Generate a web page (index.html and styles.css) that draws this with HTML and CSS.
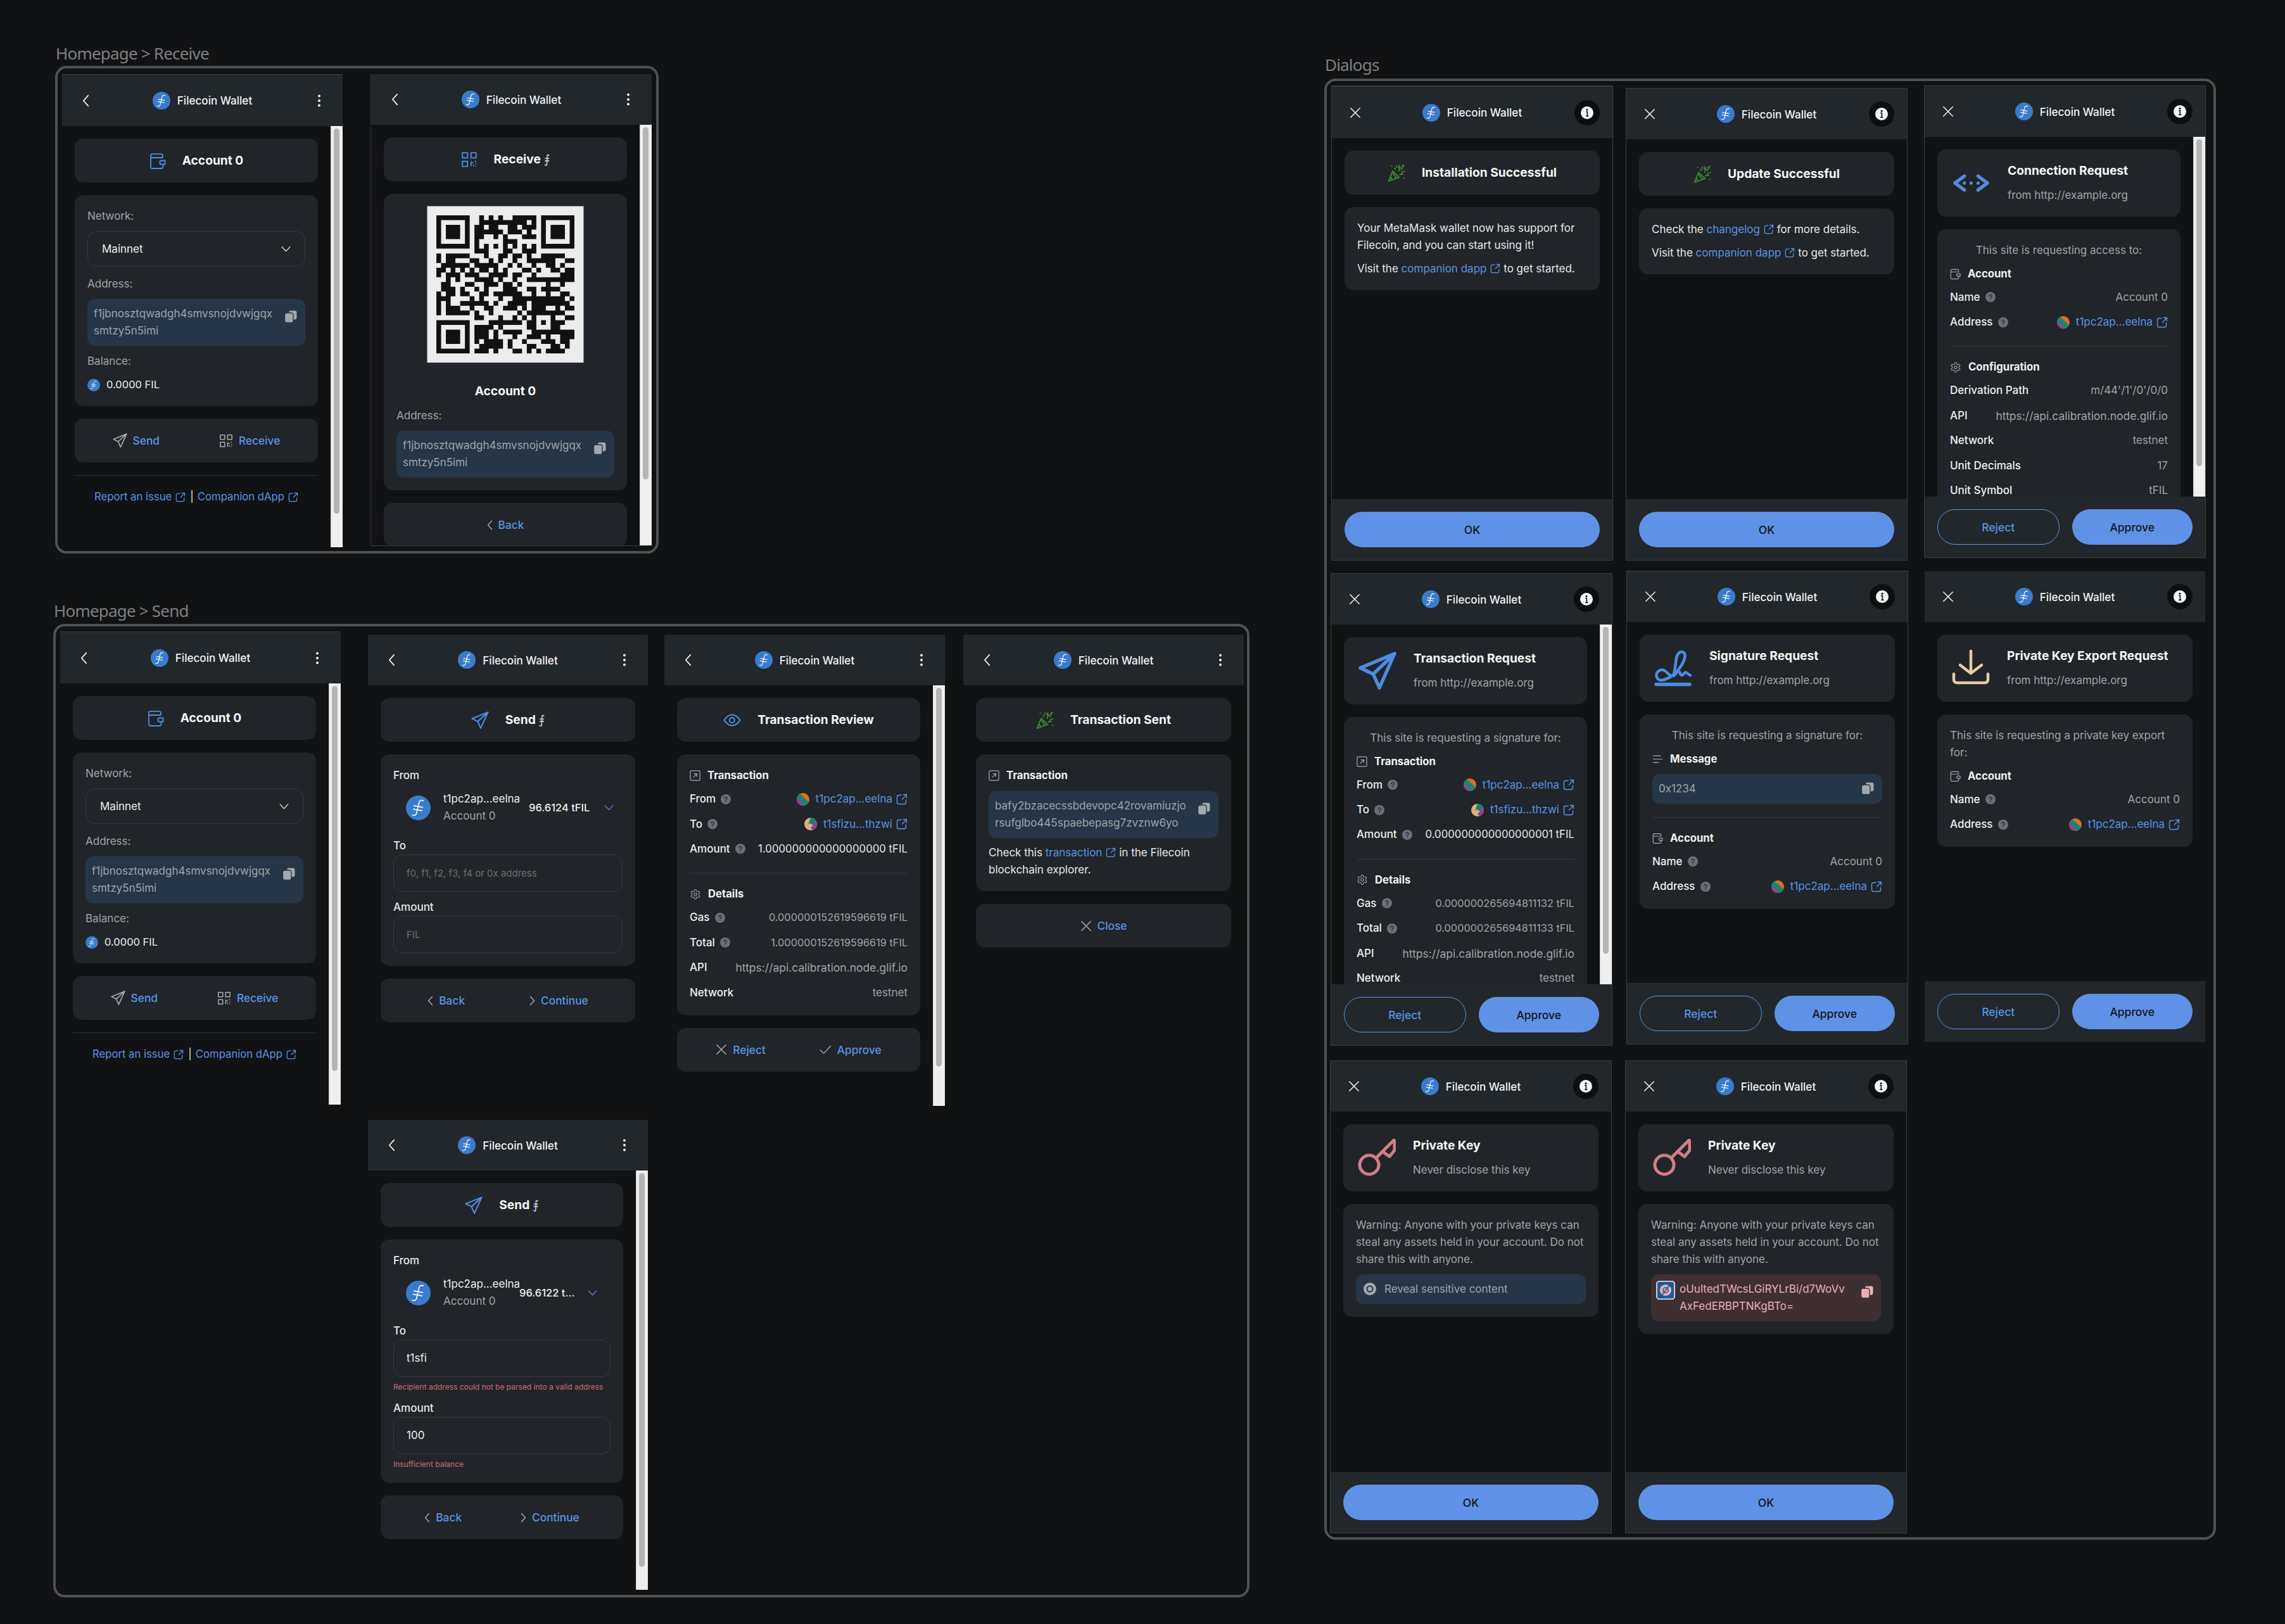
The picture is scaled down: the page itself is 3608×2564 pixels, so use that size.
FILE: index.html
```html
<!DOCTYPE html>
<html lang="en">
<head>
<meta charset="utf-8">
<title>Filecoin Wallet screens</title>
<link rel="stylesheet" href="styles.css">
</head>
<body>
<svg class="sprite" aria-hidden="true">
  <symbol id="fil" viewBox="0 0 40 40"><circle cx="20" cy="20" r="20" fill="#3a7bcb"/><path d="M28 8.500c-3.200-2-6-.5-7 3.500l-3.800 16.500c-.9 3.500-3.700 4.500-6.700 3M13 16.500l14 2.500M12 22l14 2.500" fill="none" stroke="#f2f6fc" stroke-width="1.800" stroke-linecap="round"/></symbol>
  <symbol id="back" viewBox="0 0 12 22"><path d="M10 2 2 11l8 9" fill="none" stroke="currentColor" stroke-width="2" stroke-linecap="round" stroke-linejoin="round"/></symbol>
  <symbol id="next" viewBox="0 0 12 22"><path d="m2 2 8 9-8 9" fill="none" stroke="currentColor" stroke-width="2" stroke-linecap="round" stroke-linejoin="round"/></symbol>
  <symbol id="dots" viewBox="0 0 4 20"><circle cx="2" cy="2.500" r="2" fill="currentColor"/><circle cx="2" cy="10" r="2" fill="currentColor"/><circle cx="2" cy="17.500" r="2" fill="currentColor"/></symbol>
  <symbol id="x" viewBox="0 0 20 20"><path d="m2 2 16 16M18 2 2 18" fill="none" stroke="currentColor" stroke-width="1.700" stroke-linecap="round"/></symbol>
  <symbol id="down" viewBox="0 0 16 10"><path d="m1 1 7 7.500L15 1" fill="none" stroke="currentColor" stroke-width="1.500" stroke-linecap="round" stroke-linejoin="round"/></symbol>
  <symbol id="check" viewBox="0 0 20 16"><path d="m1.500 8.500 5.500 5.500L18.500 1.500" fill="none" stroke="currentColor" stroke-width="1.500" stroke-linecap="round" stroke-linejoin="round"/></symbol>
  <symbol id="wallet" viewBox="0 0 26 26"><path d="M21 8V5a2.800 2.800 0 0 0-2.800-2.800H4.500A2.500 2.500 0 0 0 2 4.700v17.500A2.800 2.800 0 0 0 4.800 25h13.700a2.800 2.800 0 0 0 2.800-2.800V19M2 8h19M24.500 12.500h-5.200a3 3 0 0 0 0 6h5.200z" fill="none" stroke="currentColor" stroke-width="1.800" stroke-linejoin="round"/></symbol>
  <symbol id="qr" viewBox="0 0 24 24"><path d="M2 2h7.500v7.500H2zM14.500 2H22v7.500h-7.500zM2 14.500h7.500V22H2zM14.500 22v-5.500h3.500M14.500 14.500h1M20 14.500h2M21.500 17.500V19M18 22v-2.500M22 22h-1" fill="none" stroke="currentColor" stroke-width="1.700" stroke-linejoin="round"/></symbol>
  <symbol id="send" viewBox="0 0 40 40"><path d="M38 2 2 16.500l13 6.500 6.500 15zM38 2 15 23" fill="none" stroke="currentColor" stroke-width="3" stroke-linejoin="round" stroke-linecap="round"/></symbol>
  <symbol id="send-b" viewBox="0 0 40 40"><path d="M38 2 2 17l13.500 6.500L22 38zM38 2 15.500 23.500" fill="none" stroke="currentColor" stroke-width="3.600" stroke-linejoin="round" stroke-linecap="round"/></symbol>
  <symbol id="copy" viewBox="0 0 20 20"><rect x="7" y="0.500" width="12.500" height="14" rx="3" fill="currentColor"/><rect x="0.500" y="4" width="13.500" height="15.500" rx="3.500" fill="currentColor" stroke="var(--gap)" stroke-width="1.300"/></symbol>
  <symbol id="ext" viewBox="0 0 18 18"><path d="M8 2.500H4.200a2.700 2.700 0 0 0-2.700 2.700v8.600a2.700 2.700 0 0 0 2.700 2.700h8.600a2.700 2.700 0 0 0 2.700-2.700V10M9.500 9 16.300 1.700M11 1.500h5.400v5.300" fill="none" stroke="currentColor" stroke-width="1.400" stroke-linecap="round" stroke-linejoin="round"/></symbol>
  <symbol id="help" viewBox="0 0 16 16"><circle cx="8" cy="8" r="8" fill="#697078"/><path d="M5.900 6.300a2.100 2.100 0 1 1 3.400 1.700c-.8.500-1.300.9-1.300 1.800M8 11.900v.3" fill="none" stroke="#22272b" stroke-width="1.300" stroke-linecap="round"/></symbol>
  <symbol id="gear" viewBox="0 0 24 24"><path d="M12.220 2h-.44a2 2 0 0 0-2 2v.18a2 2 0 0 1-1 1.730l-.43.250a2 2 0 0 1-2 0l-.15-.08a2 2 0 0 0-2.730.730l-.22.380a2 2 0 0 0 .73 2.730l.15.100a2 2 0 0 1 1 1.720v.51a2 2 0 0 1-1 1.740l-.15.090a2 2 0 0 0-.73 2.730l.22.380a2 2 0 0 0 2.730.730l.15-.08a2 2 0 0 1 2 0l.43.250a2 2 0 0 1 1 1.730V20a2 2 0 0 0 2 2h.44a2 2 0 0 0 2-2v-.18a2 2 0 0 1 1-1.730l.43-.25a2 2 0 0 1 2 0l.15.080a2 2 0 0 0 2.730-.73l.22-.39a2 2 0 0 0-.73-2.730l-.15-.08a2 2 0 0 1-1-1.740v-.5a2 2 0 0 1 1-1.740l.15-.09a2 2 0 0 0 .73-2.730l-.22-.38a2 2 0 0 0-2.730-.73l-.15.080a2 2 0 0 1-2 0l-.43-.25a2 2 0 0 1-1-1.730V4a2 2 0 0 0-2-2z" fill="none" stroke="currentColor" stroke-width="1.400"/><circle cx="12" cy="12" r="3" fill="none" stroke="currentColor" stroke-width="1.400"/></symbol>
  <symbol id="tx" viewBox="0 0 18 18"><rect x="1" y="1" width="16" height="16" rx="1.500" fill="none" stroke="currentColor" stroke-width="1.300"/><path d="M6 12l6-6M7 6h5v5" fill="none" stroke="currentColor" stroke-width="1.300"/></symbol>
  <symbol id="msg" viewBox="0 0 18 18"><path d="M1 3.500h13M1 9h16M1 14.500h10" fill="none" stroke="currentColor" stroke-width="1.300"/></symbol>
  <symbol id="eye" viewBox="0 0 28 20"><path d="M1.500 10S6.500 1.500 14 1.500 26.500 10 26.500 10 21.500 18.500 14 18.500 1.500 10 1.500 10z" fill="none" stroke="currentColor" stroke-width="2"/><circle cx="14" cy="10" r="4" fill="none" stroke="currentColor" stroke-width="2"/></symbol>
  <symbol id="confetti" viewBox="0 0 28 28"><path d="M1.500 27 8 11l10 10zM4.500 20l3 5M8 14l5.500 8" fill="none" stroke="#3f8f2e" stroke-width="1.800" stroke-linejoin="round"/><path d="M6.500 3v.5M11 6.500l1.500 2M14.500 2.500l-1 2.500M18.500 2l-1.500 4 3-1-2.500 6M26 1.500l-3 2 1.500.5-3 4.500M22 13l5-1.500M19 17l2.500-1.500 2.500.5M26 22v.5" fill="none" stroke="#3f8f2e" stroke-width="1.800" stroke-linecap="round" stroke-linejoin="round"/></symbol>
  <symbol id="connect" viewBox="0 0 62 28"><path d="M20 3 5 14l15 11M42 3l15 11-15 11" fill="none" stroke="currentColor" stroke-width="5.500" stroke-linecap="round" stroke-linejoin="round"/><circle cx="20" cy="14" r="2.600" fill="currentColor"/><circle cx="31" cy="14" r="2.600" fill="currentColor"/><circle cx="42" cy="14" r="2.600" fill="currentColor"/></symbol>
  <symbol id="sign" viewBox="0 0 60 60"><path d="M3 55.500h53" fill="none" stroke="currentColor" stroke-width="5.500" stroke-linecap="round"/><path d="M4 44c-3-9 8-15 14-9s12 12 14 0l3-21c1-7 7-12 11-9 5 3 2 13-4 22-6 10-16 18-26 21-6 2-10 1-12-4zM31 42c3-3 6-8 8-7s2 7 5 6 4-6 7-4 4 4 6 4" fill="none" stroke="currentColor" stroke-width="4.500" stroke-linecap="round" stroke-linejoin="round"/></symbol>
  <symbol id="download" viewBox="0 0 60 60"><path d="M30 3v35M13 25l17 13 17-13M3 39v9a5 5 0 0 0 5 5h44a5 5 0 0 0 5-5v-9" fill="none" stroke="#e4cca8" stroke-width="4.500" stroke-linecap="round" stroke-linejoin="round"/></symbol>
  <symbol id="key" viewBox="0 0 60 60"><circle cx="18" cy="41" r="15" fill="none" stroke="#cf7f87" stroke-width="5"/><path d="M29 30 57 2M39 20l11 8 8-10V4" fill="none" stroke="#cf7f87" stroke-width="5" stroke-linecap="round" stroke-linejoin="round"/></symbol>
  <symbol id="info" viewBox="0 0 20 20"><circle cx="10" cy="10" r="10" fill="#f4f5f6"/><circle cx="10" cy="5.300" r="1.500" fill="#111"/><path d="M8 8.500h2.400v6.500M8 15.200h4.500" fill="none" stroke="#111" stroke-width="1.600"/></symbol>
  <symbol id="ava1" viewBox="0 0 20 20"><circle cx="10" cy="10" r="10" fill="#d9702b"/><path d="M5 1.300 19 14a10 10 0 0 1-7 5.800L.3 8A10 10 0 0 1 5 1.300z" fill="#22826f"/><path d="M.3 8 12 19.800A10 10 0 0 1 .3 8z" fill="#8e3f9a"/></symbol>
  <symbol id="ava2" viewBox="0 0 20 20"><circle cx="10" cy="10" r="10" fill="#d9b27c"/><path d="M10 0a10 10 0 0 1 8.700 5L14 12 9 9 6 11z" fill="#1f7c72"/><path d="M18.700 5A10 10 0 0 1 20 10a10 10 0 0 1-7 9.500L10 16l4-4z" fill="#8e3f9a"/></symbol>
  <symbol id="reveal" viewBox="0 0 20 20"><circle cx="10" cy="10" r="10" fill="#a3a8ad"/><circle cx="10" cy="10" r="4.500" fill="none" stroke="#263646" stroke-width="2"/></symbol>
  <symbol id="hide" viewBox="0 0 30 30"><rect x="1" y="1" width="28" height="28" rx="4" fill="#1f5a96" stroke="#f2f4f7" stroke-width="1.600"/><circle cx="15" cy="15" r="9" fill="#e8aeb4"/><circle cx="15" cy="15" r="4" fill="none" stroke="#1f5a96" stroke-width="1.600"/><path d="M8 24 22 6" fill="none" stroke="#1f5a96" stroke-width="1.800"/></symbol>
</svg>

<main class="canvas">
  <section>
    <h2 class="group-label lbl-receive">Homepage &gt; Receive</h2>
    <div class="frame fr-receive"></div>

    <article class="screen s-a1">
      <header class="hdr hdr-tall"><svg class="ic i-chev"><use href="#back"/></svg><div class="brand"><svg class="ic i28"><use href="#fil"/></svg><span>Filecoin Wallet</span></div><svg class="ic i-dots"><use href="#dots"/></svg></header>
      <div class="view"><div class="content">
        <div class="card title"><svg class="ic i26 blue"><use href="#wallet"/></svg><span>Account 0</span></div>
        <div class="card">
          <div class="lab">Network:</div>
          <div class="select"><span>Mainnet</span><svg class="ic i-down"><use href="#down"/></svg></div>
          <div class="lab spaced">Address:</div>
          <div class="addr"><p>f1jbnosztqwadgh4smvsnojdvwjgqx<br>smtzy5n5imi</p><svg class="ic i20"><use href="#copy"/></svg></div>
          <div class="lab spaced">Balance:</div>
          <div class="bal-row"><svg class="ic i20"><use href="#fil"/></svg><span>0.0000 FIL</span></div>
        </div>
        <div class="card btns gap-home"><a class="lnk"><svg class="ic i23 gray"><use href="#send"/></svg>Send</a><a class="lnk"><svg class="ic i22 gray"><use href="#qr"/></svg>Receive</a></div>
        <div class="foot"><a>Report an issue<svg class="ic i16"><use href="#ext"/></svg></a><span>|</span><a>Companion dApp<svg class="ic i16"><use href="#ext"/></svg></a></div>
      </div><div class="sb"><div class="thumb t608"></div></div></div>
    </article>

    <article class="screen s-a2">
      <header class="hdr"><svg class="ic i-chev"><use href="#back"/></svg><div class="brand"><svg class="ic i28"><use href="#fil"/></svg><span>Filecoin Wallet</span></div><svg class="ic i-dots"><use href="#dots"/></svg></header>
      <div class="view"><div class="content">
        <div class="card title"><svg class="ic i26 blue"><use href="#qr"/></svg><span>Receive <i class="sym">⨎</i></span></div>
        <div class="card qr-card">
          <div class="qr"><svg viewBox="0 0 29 29" class="qr-svg"><path d="M.5.5h6v6h-6zM22.500.5h6v6h-6zM.5 22.500h6v6h-6z" fill="none" stroke="#111" stroke-width="1"/><path d="M2 2h3v3H2zM24 2h3v3h-3zM2 24h3v3H2z" fill="#111"/><path fill="none" stroke="#111" d="M9 .5h1M11 .5h1M13 .5h1M16 .5h5M9 1.500h10M20 1.500h1M8 2.500h2M11 2.500h2M15 2.500h2M18 2.500h3M8 3.500h6M15 3.500h3M19 3.500h1M8 4.500h2M12 4.500h1M14 4.500h1M18 4.500h3M8 5.500h1M14 5.500h3M8 6.500h1M10 6.500h1M12 6.500h1M14 6.500h1M16 6.500h1M18 6.500h1M20 6.500h1M8 7.500h3M14 7.500h2M18 7.500h3M0 8.500h1M2 8.500h5M10 8.500h1M13 8.500h2M16 8.500h2M19 8.500h1M22 8.500h5M0 9.500h1M2 9.500h2M7 9.500h2M11 9.500h1M13 9.500h1M16 9.500h1M19 9.500h6M27 9.500h2M1 10.500h6M8 10.500h5M15 10.500h1M17 10.500h1M20 10.500h1M23 10.500h2M26 10.500h1M0 11.500h2M3 11.500h1M5 11.500h1M7 11.500h1M9 11.500h2M12 11.500h1M14 11.500h1M18 11.500h2M21 11.500h1M24 11.500h2M27 11.500h2M0 12.500h1M2 12.500h3M6 12.500h3M11 12.500h4M16 12.500h2M20 12.500h1M26 12.500h3M2 13.500h1M4 13.500h1M8 13.500h4M13 13.500h1M16 13.500h1M19 13.500h10M1 14.500h2M6 14.500h2M10 14.500h3M14 14.500h2M17 14.500h1M23 14.500h1M26 14.500h1M1 15.500h3M5 15.500h1M8 15.500h1M10 15.500h1M14 15.500h3M19 15.500h2M22 15.500h4M0 16.500h1M2 16.500h2M5 16.500h2M9 16.500h2M12 16.500h6M20 16.500h1M23 16.500h1M26 16.500h2M0 17.500h3M7 17.500h1M9 17.500h1M13 17.500h1M16 17.500h11M28 17.500h1M0 18.500h1M2 18.500h1M5 18.500h6M12 18.500h1M15 18.500h4M20 18.500h8M0 19.500h1M2 19.500h3M7 19.500h1M10 19.500h2M14 19.500h3M18 19.500h1M20 19.500h3M25 19.500h1M27 19.500h2M0 20.500h1M2 20.500h5M8 20.500h1M11 20.500h1M17 20.500h1M19 20.500h8M8 21.500h2M13 21.500h1M16 21.500h1M18 21.500h1M20 21.500h1M24 21.500h1M27 21.500h2M11 22.500h7M19 22.500h2M22 22.500h1M24 22.500h3M8 23.500h4M13 23.500h1M19 23.500h2M24 23.500h2M8 24.500h3M12 24.500h1M14 24.500h4M20 24.500h9M8 25.500h3M12 25.500h1M16 25.500h1M19 25.500h3M23 25.500h1M26 25.500h3M8 26.500h1M10 26.500h4M15 26.500h1M18 26.500h1M22 26.500h3M26 26.500h2M9 27.500h5M15 27.500h1M19 27.500h2M24 27.500h2M27 27.500h1M8 28.500h3M12 28.500h1M16 28.500h2M19 28.500h1M21 28.500h1M23 28.500h4"/></svg></div>
          <div class="qr-name">Account 0</div>
          <div class="lab qr-lab">Address:</div>
          <div class="addr"><p>f1jbnosztqwadgh4smvsnojdvwjgqx<br>smtzy5n5imi</p><svg class="ic i20"><use href="#copy"/></svg></div>
        </div>
        <div class="card btns"><a class="lnk"><svg class="ic i-chev-s gray"><use href="#back"/></svg>Back</a></div>
      </div><div class="sb"><div class="thumb t556"></div></div></div>
    </article>
  </section>

  <section>
    <h2 class="group-label lbl-send">Homepage &gt; Send</h2>
    <div class="frame fr-send"></div>

    <article class="screen s-b1">
      <header class="hdr hdr-tall"><svg class="ic i-chev"><use href="#back"/></svg><div class="brand"><svg class="ic i28"><use href="#fil"/></svg><span>Filecoin Wallet</span></div><svg class="ic i-dots"><use href="#dots"/></svg></header>
      <div class="view"><div class="content">
        <div class="card title"><svg class="ic i26 blue"><use href="#wallet"/></svg><span>Account 0</span></div>
        <div class="card">
          <div class="lab">Network:</div>
          <div class="select"><span>Mainnet</span><svg class="ic i-down"><use href="#down"/></svg></div>
          <div class="lab spaced">Address:</div>
          <div class="addr"><p>f1jbnosztqwadgh4smvsnojdvwjgqx<br>smtzy5n5imi</p><svg class="ic i20"><use href="#copy"/></svg></div>
          <div class="lab spaced">Balance:</div>
          <div class="bal-row"><svg class="ic i20"><use href="#fil"/></svg><span>0.0000 FIL</span></div>
        </div>
        <div class="card btns gap-home"><a class="lnk"><svg class="ic i23 gray"><use href="#send"/></svg>Send</a><a class="lnk"><svg class="ic i22 gray"><use href="#qr"/></svg>Receive</a></div>
        <div class="foot"><a>Report an issue<svg class="ic i16"><use href="#ext"/></svg></a><span>|</span><a>Companion dApp<svg class="ic i16"><use href="#ext"/></svg></a></div>
      </div><div class="sb"><div class="thumb t608"></div></div></div>
    </article>

    <article class="screen s-b2">
      <header class="hdr"><svg class="ic i-chev"><use href="#back"/></svg><div class="brand"><svg class="ic i28"><use href="#fil"/></svg><span>Filecoin Wallet</span></div><svg class="ic i-dots"><use href="#dots"/></svg></header>
      <div class="view"><div class="content">
        <div class="card title"><svg class="ic i28 blue"><use href="#send"/></svg><span>Send <i class="sym">⨎</i></span></div>
        <div class="card">
          <div class="lab strong">From</div>
          <div class="acct"><svg class="ic i40"><use href="#fil"/></svg><div class="acct-id"><div>t1pc2ap...eelna</div><div class="muted">Account 0</div></div><div class="acct-bal">96.6124 tFIL</div><svg class="ic i-down blue"><use href="#down"/></svg></div>
          <div class="lab strong to">To</div>
          <div class="input ph">f0, f1, f2, f3, f4 or 0x address</div>
          <div class="lab strong amt">Amount</div>
          <div class="input ph">FIL</div>
        </div>
        <div class="card btns gap-bc"><a class="lnk"><svg class="ic i-chev-s gray"><use href="#back"/></svg>Back</a><a class="lnk"><svg class="ic i-chev-s gray"><use href="#next"/></svg>Continue</a></div>
      </div></div>
    </article>

    <article class="screen s-b3">
      <header class="hdr"><svg class="ic i-chev"><use href="#back"/></svg><div class="brand"><svg class="ic i28"><use href="#fil"/></svg><span>Filecoin Wallet</span></div><svg class="ic i-dots"><use href="#dots"/></svg></header>
      <div class="view"><div class="content">
        <div class="card title"><svg class="ic i-eye blue"><use href="#eye"/></svg><span>Transaction Review</span></div>
        <div class="card data">
          <div class="hd"><svg class="ic i17 gray"><use href="#tx"/></svg>Transaction</div>
          <div class="kv"><span class="k">From<svg class="ic i16"><use href="#help"/></svg></span><a class="addr-link"><svg class="ic i20"><use href="#ava1"/></svg>t1pc2ap...eelna<svg class="ic i18"><use href="#ext"/></svg></a></div>
          <div class="kv"><span class="k">To<svg class="ic i16"><use href="#help"/></svg></span><a class="addr-link"><svg class="ic i20"><use href="#ava2"/></svg>t1sfizu...thzwi<svg class="ic i18"><use href="#ext"/></svg></a></div>
          <div class="kv"><span class="k">Amount<svg class="ic i16"><use href="#help"/></svg></span><span class="v-w">1.000000000000000000 tFIL</span></div>
          <hr class="rule">
          <div class="hd"><svg class="ic i18 gray"><use href="#gear"/></svg>Details</div>
          <div class="kv"><span class="k">Gas<svg class="ic i16"><use href="#help"/></svg></span><span class="v num">0.000000152619596619 tFIL</span></div>
          <div class="kv"><span class="k">Total<svg class="ic i16"><use href="#help"/></svg></span><span class="v num">1.000000152619596619 tFIL</span></div>
          <div class="kv"><span class="k">API</span><span class="v url">https://api.calibration.node.glif.io</span></div>
          <div class="kv"><span class="k">Network</span><span class="v">testnet</span></div>
        </div>
        <div class="card btns gap-ra"><a class="lnk"><svg class="ic i18 gray"><use href="#x"/></svg>Reject</a><a class="lnk"><svg class="ic i-check gray"><use href="#check"/></svg>Approve</a></div>
      </div><div class="sb"><div class="thumb t598"></div></div></div>
    </article>

    <article class="screen s-b4">
      <header class="hdr"><svg class="ic i-chev"><use href="#back"/></svg><div class="brand"><svg class="ic i28"><use href="#fil"/></svg><span>Filecoin Wallet</span></div><svg class="ic i-dots"><use href="#dots"/></svg></header>
      <div class="view"><div class="content">
        <div class="card title"><svg class="ic i28"><use href="#confetti"/></svg><span>Transaction Sent</span></div>
        <div class="card">
          <div class="hd"><svg class="ic i17 gray"><use href="#tx"/></svg>Transaction</div>
          <div class="addr addr-tx"><p>bafy2bzacecssbdevopc42rovamiuzjo<br>rsufglbo445spaebepasg7zvznw6yo</p><svg class="ic i20"><use href="#copy"/></svg></div>
          <p class="para after-box">Check this <a>transaction<svg class="ic i16 inl"><use href="#ext"/></svg></a> in the Filecoin<br>blockchain explorer.</p>
        </div>
        <div class="card btns"><a class="lnk"><svg class="ic i18 gray"><use href="#x"/></svg>Close</a></div>
      </div></div>
    </article>

    <article class="screen s-b5">
      <header class="hdr"><svg class="ic i-chev"><use href="#back"/></svg><div class="brand"><svg class="ic i28"><use href="#fil"/></svg><span>Filecoin Wallet</span></div><svg class="ic i-dots"><use href="#dots"/></svg></header>
      <div class="view"><div class="content">
        <div class="card title"><svg class="ic i28 blue"><use href="#send"/></svg><span>Send <i class="sym">⨎</i></span></div>
        <div class="card">
          <div class="lab strong">From</div>
          <div class="acct narrow"><svg class="ic i40"><use href="#fil"/></svg><div class="acct-id"><div>t1pc2ap...eelna</div><div class="muted">Account 0</div></div><div class="acct-bal">96.6122 t...</div><svg class="ic i-down blue"><use href="#down"/></svg></div>
          <div class="lab strong to">To</div>
          <div class="input">t1sfi</div>
          <div class="err">Recipient address could not be parsed into a valid address</div>
          <div class="lab strong amt">Amount</div>
          <div class="input">100</div>
          <div class="err">Insufficient balance</div>
        </div>
        <div class="card btns gap-bc2"><a class="lnk"><svg class="ic i-chev-s gray"><use href="#back"/></svg>Back</a><a class="lnk"><svg class="ic i-chev-s gray"><use href="#next"/></svg>Continue</a></div>
      </div><div class="sb"><div class="thumb t622"></div></div></div>
    </article>
  </section>

  <section>
    <h2 class="group-label lbl-dialogs">Dialogs</h2>
    <div class="frame fr-dialogs"></div>

    <article class="screen s-c1 edged">
      <header class="hdr hdr-tall"><svg class="ic i18"><use href="#x"/></svg><div class="brand"><svg class="ic i28"><use href="#fil"/></svg><span>Filecoin Wallet</span></div><div class="info"><svg class="ic i20"><use href="#info"/></svg></div></header>
      <div class="view"><div class="content">
        <div class="card title"><svg class="ic i28"><use href="#confetti"/></svg><span>Installation Successful</span></div>
        <div class="card"><p class="para">Your MetaMask wallet now has support for<br>Filecoin, and you can start using it!</p><p class="para next">Visit the <a>companion dapp<svg class="ic i16 inl"><use href="#ext"/></svg></a> to get started.</p></div>
      </div></div>
      <footer class="ftr"><button class="pri">OK</button></footer>
    </article>

    <article class="screen s-c2 edged">
      <header class="hdr"><svg class="ic i18"><use href="#x"/></svg><div class="brand"><svg class="ic i28"><use href="#fil"/></svg><span>Filecoin Wallet</span></div><div class="info"><svg class="ic i20"><use href="#info"/></svg></div></header>
      <div class="view"><div class="content">
        <div class="card title"><svg class="ic i28"><use href="#confetti"/></svg><span>Update Successful</span></div>
        <div class="card"><p class="para">Check the <a>changelog<svg class="ic i16 inl"><use href="#ext"/></svg></a> for more details.</p><p class="para next">Visit the <a>companion dapp<svg class="ic i16 inl"><use href="#ext"/></svg></a> to get started.</p></div>
      </div></div>
      <footer class="ftr"><button class="pri">OK</button></footer>
    </article>

    <article class="screen s-c3 edged">
      <header class="hdr"><svg class="ic i18"><use href="#x"/></svg><div class="brand"><svg class="ic i28"><use href="#fil"/></svg><span>Filecoin Wallet</span></div><div class="info"><svg class="ic i20"><use href="#info"/></svg></div></header>
      <div class="view"><div class="content">
        <div class="card req"><svg class="ic i-connect blue"><use href="#connect"/></svg><div><h3>Connection Request</h3><p>from http://example.org</p></div></div>
        <div class="card data">
          <p class="site">This site is requesting access to:</p>
          <div class="hd"><svg class="ic i17 gray"><use href="#wallet"/></svg>Account</div>
          <div class="kv"><span class="k">Name<svg class="ic i16"><use href="#help"/></svg></span><span class="v">Account 0</span></div>
          <div class="kv"><span class="k">Address<svg class="ic i16"><use href="#help"/></svg></span><a class="addr-link"><svg class="ic i20"><use href="#ava1"/></svg>t1pc2ap...eelna<svg class="ic i18"><use href="#ext"/></svg></a></div>
          <hr class="rule">
          <div class="hd"><svg class="ic i18 gray"><use href="#gear"/></svg>Configuration</div>
          <div class="kv"><span class="k">Derivation Path</span><span class="v">m/44'/1'/0'/0/0</span></div>
          <div class="kv"><span class="k">API</span><span class="v url">https://api.calibration.node.glif.io</span></div>
          <div class="kv"><span class="k">Network</span><span class="v">testnet</span></div>
          <div class="kv"><span class="k">Unit Decimals</span><span class="v">17</span></div>
          <div class="kv"><span class="k">Unit Symbol</span><span class="v">tFIL</span></div>
        </div>
      </div><div class="sb"><div class="thumb t516"></div></div></div>
      <footer class="ftr"><button class="sec">Reject</button><button class="pri">Approve</button></footer>
    </article>

    <article class="screen s-c4 edged">
      <header class="hdr"><svg class="ic i18"><use href="#x"/></svg><div class="brand"><svg class="ic i28"><use href="#fil"/></svg><span>Filecoin Wallet</span></div><div class="info"><svg class="ic i20"><use href="#info"/></svg></div></header>
      <div class="view"><div class="content">
        <div class="card req"><svg class="ic i60 blue"><use href="#send-b"/></svg><div><h3>Transaction Request</h3><p>from http://example.org</p></div></div>
        <div class="card data">
          <p class="site">This site is requesting a signature for:</p>
          <div class="hd"><svg class="ic i17 gray"><use href="#tx"/></svg>Transaction</div>
          <div class="kv"><span class="k">From<svg class="ic i16"><use href="#help"/></svg></span><a class="addr-link"><svg class="ic i20"><use href="#ava1"/></svg>t1pc2ap...eelna<svg class="ic i18"><use href="#ext"/></svg></a></div>
          <div class="kv"><span class="k">To<svg class="ic i16"><use href="#help"/></svg></span><a class="addr-link"><svg class="ic i20"><use href="#ava2"/></svg>t1sfizu...thzwi<svg class="ic i18"><use href="#ext"/></svg></a></div>
          <div class="kv"><span class="k">Amount<svg class="ic i16"><use href="#help"/></svg></span><span class="v-w">0.000000000000000001 tFIL</span></div>
          <hr class="rule">
          <div class="hd"><svg class="ic i18 gray"><use href="#gear"/></svg>Details</div>
          <div class="kv"><span class="k">Gas<svg class="ic i16"><use href="#help"/></svg></span><span class="v num">0.000000265694811132 tFIL</span></div>
          <div class="kv"><span class="k">Total<svg class="ic i16"><use href="#help"/></svg></span><span class="v num">0.000000265694811133 tFIL</span></div>
          <div class="kv"><span class="k">API</span><span class="v url">https://api.calibration.node.glif.io</span></div>
          <div class="kv"><span class="k">Network</span><span class="v">testnet</span></div>
        </div>
      </div><div class="sb"><div class="thumb t516"></div></div></div>
      <footer class="ftr"><button class="sec">Reject</button><button class="pri">Approve</button></footer>
    </article>

    <article class="screen s-c5 edged">
      <header class="hdr"><svg class="ic i18"><use href="#x"/></svg><div class="brand"><svg class="ic i28"><use href="#fil"/></svg><span>Filecoin Wallet</span></div><div class="info"><svg class="ic i20"><use href="#info"/></svg></div></header>
      <div class="view"><div class="content">
        <div class="card req"><svg class="ic i60 blue"><use href="#sign"/></svg><div><h3>Signature Request</h3><p>from http://example.org</p></div></div>
        <div class="card data">
          <p class="site">This site is requesting a signature for:</p>
          <div class="hd"><svg class="ic i17 gray"><use href="#msg"/></svg>Message</div>
          <div class="msg-box"><span>0x1234</span><svg class="ic i20"><use href="#copy"/></svg></div>
          <hr class="rule">
          <div class="hd"><svg class="ic i17 gray"><use href="#wallet"/></svg>Account</div>
          <div class="kv"><span class="k">Name<svg class="ic i16"><use href="#help"/></svg></span><span class="v">Account 0</span></div>
          <div class="kv"><span class="k">Address<svg class="ic i16"><use href="#help"/></svg></span><a class="addr-link"><svg class="ic i20"><use href="#ava1"/></svg>t1pc2ap...eelna<svg class="ic i18"><use href="#ext"/></svg></a></div>
        </div>
      </div></div>
      <footer class="ftr"><button class="sec">Reject</button><button class="pri">Approve</button></footer>
    </article>

    <article class="screen s-c6">
      <header class="hdr"><svg class="ic i18"><use href="#x"/></svg><div class="brand"><svg class="ic i28"><use href="#fil"/></svg><span>Filecoin Wallet</span></div><div class="info"><svg class="ic i20"><use href="#info"/></svg></div></header>
      <div class="view"><div class="content">
        <div class="card req"><svg class="ic i60"><use href="#download"/></svg><div><h3>Private Key Export Request</h3><p>from http://example.org</p></div></div>
        <div class="card data">
          <p class="site left">This site is requesting a private key export<br>for:</p>
          <div class="hd"><svg class="ic i17 gray"><use href="#wallet"/></svg>Account</div>
          <div class="kv"><span class="k">Name<svg class="ic i16"><use href="#help"/></svg></span><span class="v">Account 0</span></div>
          <div class="kv"><span class="k">Address<svg class="ic i16"><use href="#help"/></svg></span><a class="addr-link"><svg class="ic i20"><use href="#ava1"/></svg>t1pc2ap...eelna<svg class="ic i18"><use href="#ext"/></svg></a></div>
        </div>
      </div></div>
      <footer class="ftr"><button class="sec">Reject</button><button class="pri">Approve</button></footer>
    </article>

    <article class="screen s-c7 edged">
      <header class="hdr"><svg class="ic i18"><use href="#x"/></svg><div class="brand"><svg class="ic i28"><use href="#fil"/></svg><span>Filecoin Wallet</span></div><div class="info"><svg class="ic i20"><use href="#info"/></svg></div></header>
      <div class="view"><div class="content">
        <div class="card req"><svg class="ic i60"><use href="#key"/></svg><div><h3>Private Key</h3><p>Never disclose this key</p></div></div>
        <div class="card">
          <p class="site left">Warning: Anyone with your private keys can<br>steal any assets held in your account. Do not<br>share this with anyone.</p>
          <div class="reveal"><svg class="ic i20"><use href="#reveal"/></svg><span>Reveal sensitive content</span></div>
        </div>
      </div></div>
      <footer class="ftr"><button class="pri">OK</button></footer>
    </article>

    <article class="screen s-c8 edged">
      <header class="hdr"><svg class="ic i18"><use href="#x"/></svg><div class="brand"><svg class="ic i28"><use href="#fil"/></svg><span>Filecoin Wallet</span></div><div class="info"><svg class="ic i20"><use href="#info"/></svg></div></header>
      <div class="view"><div class="content">
        <div class="card req"><svg class="ic i60"><use href="#key"/></svg><div><h3>Private Key</h3><p>Never disclose this key</p></div></div>
        <div class="card">
          <p class="site left">Warning: Anyone with your private keys can<br>steal any assets held in your account. Do not<br>share this with anyone.</p>
          <div class="secret"><svg class="ic i30"><use href="#hide"/></svg><p>oUultedTWcsLGiRYLrBi/d7WoVv<br>AxFedERBPTNKgBTo=</p><svg class="ic i20"><use href="#copy"/></svg></div>
        </div>
      </div></div>
      <footer class="ftr"><button class="pri">OK</button></footer>
    </article>
  </section>
</main>
</body>
</html>
```

FILE: styles.css
```css
* { box-sizing: border-box; }
html, body { margin: 0; padding: 0; background: #111213; }
body { font-family: Inter, "Noto Sans", sans-serif; font-size: 17px; line-height: 27px; color: #eceef0; }
p, h2, h3 { margin: 0; font: inherit; }
a { color: #5a93e6; }
.sprite { position: absolute; width: 0; height: 0; overflow: hidden; }

.canvas { position: relative; width: 3608px; height: 2564px; overflow: hidden; }

.group-label { position: absolute; font-family: "Noto Sans", sans-serif; font-size: 26px; line-height: 34px; color: #7d7f82; letter-spacing: -0.8px; font-weight: 400; }
.lbl-receive { left: 88px; top: 67px; }
.lbl-send { left: 85px; top: 947px; }
.lbl-dialogs { left: 2092px; top: 85px; }

.frame { position: absolute; border: 4px solid #505152; border-radius: 18px; }
.fr-receive { left: 87px; top: 104px; width: 953px; height: 770px; }
.fr-send { left: 84px; top: 985px; width: 1889px; height: 1537px; }
.fr-dialogs { left: 2091px; top: 124px; width: 1408px; height: 2307px; }

/* Screens sit on a free canvas */
.screen { position: absolute; width: 443px; display: flex; flex-direction: column; overflow: hidden; background: #111213; }
.edged { box-shadow: 0 0 0 1px #3a3e42; }
.s-a1 { left: 98px; top: 117px; height: 747px; }
.s-a2 { left: 586px; top: 117px; height: 744px; box-shadow: 0 1px 0 #3a3e42, -1px 0 0 #2c3034; }
.s-b1 { left: 95px; top: 997px; height: 747px; }
.s-b2 { left: 581px; top: 1002px; width: 442px; height: 640px; }
.s-b3 { left: 1049px; top: 1002px; height: 744px; }
.s-b4 { left: 1521px; top: 1002px; height: 640px; }
.s-b5 { left: 581px; top: 1768px; width: 442px; height: 742px; }
.s-c1 { left: 2103px; top: 136px; height: 748px; }
.s-c2 { left: 2568px; top: 140px; height: 744px; }
.s-c3 { left: 3039px; top: 136px; height: 744px; }
.s-c4 { left: 2102px; top: 906px; height: 744px; }
.s-c5 { left: 2569px; top: 902px; height: 746px; }
.s-c6 { left: 3039px; top: 902px; height: 743px; }
.s-c7 { left: 2101px; top: 1675px; height: 745px; }
.s-c8 { left: 2567px; top: 1675px; height: 745px; }

.hdr { flex: none; height: 80px; background: #22272b; display: grid; grid-template-columns: 74px 1fr 74px; align-items: center; justify-items: center; color: #f2f3f4; }
.hdr-tall { height: 82px; border-top: 1px solid #3a3e42; }
.brand { display: flex; align-items: center; gap: 11px; font-weight: 500; font-size: 17.100px; color: #f2f3f4; }
.info { justify-self: end; margin-right: 20px; width: 40px; height: 40px; border-radius: 50%; background: #0d0e0f; display: flex; align-items: center; justify-content: center; }

.view { flex: 1; min-height: 0; display: flex; }
.content { flex: 1; min-width: 0; padding: 20px; display: flex; flex-direction: column; gap: 20px; overflow: hidden; }
.sb { flex: none; width: 19px; background: #efefef; padding: 4px 5px 0 4px; border-left: 1px solid #cfcfcf; }
.thumb { background: #b5b5b5; border-radius: 5px; }
.t516 { height: 516px; }
.t556 { height: 556px; }
.t598 { height: 598px; }
.t608 { height: 608px; }
.t622 { height: 622px; }

.card { flex: none; background: #212529; border-radius: 14px; padding: 20px; }
.title { height: 69px; padding: 0; display: flex; align-items: center; justify-content: center; gap: 26px; font-weight: 700; font-size: 19.200px; color: #f5f6f7; }
.btns { height: 69px; padding: 0; display: flex; align-items: center; justify-content: center; }
.gap-home { gap: 94px; }
.gap-bc { gap: 102px; }
.gap-bc2 { gap: 93px; }
.gap-ra { gap: 85px; }
.lnk { display: flex; align-items: center; gap: 9px; color: #5a93e6; font-weight: 500; font-size: 17.300px; }

.ic { display: block; flex: none; }
.i16 { width: 16px; height: 16px; }
.i17 { width: 17px; height: 17px; }
.i18 { width: 18px; height: 18px; }
.i20 { width: 20px; height: 20px; }
.i22 { width: 22px; height: 22px; }
.i23 { width: 23px; height: 23px; }
.i26 { width: 26px; height: 26px; }
.i28 { width: 28px; height: 28px; }
.i30 { width: 30px; height: 30px; }
.i40 { width: 39px; height: 39px; }
.i60 { width: 60px; height: 60px; }
.i-chev { width: 11px; height: 20px; }
.i-chev-s { width: 9px; height: 16px; }
.i-dots { width: 4px; height: 20px; }
.i-down { width: 15px; height: 9px; }
.i-eye { width: 28px; height: 20px; }
.i-check { width: 19px; height: 15px; }
.i-connect { width: 61px; height: 28px; margin: 16px 0; }
.blue { color: #4f8be0; }
.gray { color: #a3a8ad; }
.inl { display: inline-block; margin-left: 6px; vertical-align: -2px; }

.lab { color: #9ea3a8; }
.lab.strong { color: #e6e8ea; font-weight: 500; }
.spaced { margin-top: 14px; margin-bottom: 10px; }
.addr + .spaced { margin-top: 11px; }
.lab:first-child { margin-bottom: 10px; }
.select { height: 56px; border: 1px solid #343a40; border-radius: 14px; padding: 0 22px; display: flex; align-items: center; justify-content: space-between; color: #eceef0; }
.addr { --gap: #263646; background: #263646; border-radius: 12px; padding: 10px 13px 10px 10px; display: flex; justify-content: space-between; align-items: flex-start; color: #9ea3a8; white-space: nowrap; }
.addr .ic { margin-top: 8px; color: #a3a8ad; }
.bal-row { display: flex; align-items: center; gap: 10px; font-size: 16.500px; }
.addr-tx { margin-top: 11px; }

.foot { flex: none; margin-top: 0; border-top: 1px solid #2a2e32; padding-top: 20px; display: flex; justify-content: center; align-items: center; font-size: 16.700px; color: #e6e8ea; }
.foot a { display: flex; align-items: center; gap: 6px; }
.foot span { margin: 0 6px 0 7px; }

.qr-card { padding: 19px 20px 20px; }
.qr { width: 248px; height: 248px; margin: 0 auto; padding: 15px; background: #ececec; outline: 1px solid #80848a; outline-offset: -1px; }
.qr-svg { display: block; width: 218px; height: 218px; }
.qr-name { text-align: center; font-weight: 700; font-size: 19.200px; margin-top: 31px; color: #f5f6f7; }
.qr-lab { margin-top: 12px; margin-bottom: 10px; }

.acct { display: flex; align-items: center; padding-left: 20px; margin-top: 10px; }
.acct-id { width: 135px; margin-left: 20px; white-space: nowrap; overflow: hidden; }
.narrow .acct-id { width: 120px; }
.acct-bal { width: 119px; font-size: 16.500px; font-weight: 500; white-space: nowrap; }
.narrow .acct-bal { width: 108px; }
.muted { color: #9ea3a8; }
.lab.to { margin-top: 20px; margin-bottom: 0; }
.lab.amt { margin-top: 11px; margin-bottom: 0; }
.input { height: 59px; border: 1px solid #343a40; border-radius: 14px; padding: 0 20px; display: flex; align-items: center; }
.ph { color: #696e73; font-size: 15px; }
.err { margin-top: 6px; font-size: 12px; line-height: 19px; color: #cf6d75; white-space: nowrap; }

.data { padding-bottom: 16px; }
.hd { display: flex; align-items: center; gap: 11px; font-weight: 700; font-size: 16.700px; color: #f0f1f2; }
.hd + .kv { margin-top: 4px; }
.kv { height: 39.400px; display: flex; justify-content: space-between; align-items: center; white-space: nowrap; }
.k { display: flex; align-items: center; gap: 8px; font-weight: 500; color: #eceef0; }
.v { color: #9ea3a8; }
.num { font-size: 16.300px; }
.url { font-size: 17.500px; }
.v-w { color: #e6e8ea; font-size: 16.800px; }
.addr-link { display: flex; align-items: center; gap: 10px; }
.addr-link .ic:last-child { margin-left: -4px; }
.rule { border: 0; border-top: 1px solid #33383d; margin: 18px 0 19px; }
.msg-box + .rule { margin-top: 21px; }
.site { color: #9ea3a8; text-align: center; margin-bottom: 9.500px; white-space: nowrap; }
.site.left { text-align: left; }
.req { height: 106px; padding: 0 0 0 23px; display: flex; align-items: center; gap: 27px; }
.req h3 { font-weight: 700; font-size: 19.200px; color: #f5f6f7; line-height: 27px; }
.req p { color: #9ea3a8; margin-top: 12px; }
.para { color: #e6e8ea; white-space: nowrap; }
.para.next { margin-top: 10px; }
.after-box { margin-top: 10px; }
.msg-box { --gap: #263646; height: 47px; background: #263646; border-radius: 12px; padding: 0 13px 0 10px; display: flex; align-items: center; justify-content: space-between; color: #9ea3a8; margin-top: 10px; }
.msg-box .ic { color: #a3a8ad; }
.reveal { height: 47px; background: #263646; border-radius: 12px; padding: 0 12px; display: flex; align-items: center; gap: 13px; color: #9ea3a8; }
.secret { --gap: #3e2f33; background: #3e2f33; border-radius: 12px; padding: 10px 12px 10px 8px; display: flex; align-items: flex-start; color: #e8aeb4; white-space: nowrap; }
.secret p { flex: 1; margin-left: 7px; }
.secret .ic:last-child { margin-top: 8px; color: #e8aeb4; }
.secret .ic:first-child { margin-top: 0; }

.ftr { flex: none; height: 96px; background: #22272b; padding: 20px; display: flex; gap: 20px; align-items: flex-start; }
button { flex: 1; height: 56px; border-radius: 28px; font: inherit; font-size: 17.500px; font-weight: 500; cursor: pointer; }
.pri { background: #5f91e6; border: 0; color: #13161a; }
.sec { background: transparent; border: 1px solid #5a93e6; color: #5a93e6; }
.sym { font-family: "DejaVu Sans", sans-serif; font-style: normal; font-weight: 400; color: #c8ccd0; }
```
